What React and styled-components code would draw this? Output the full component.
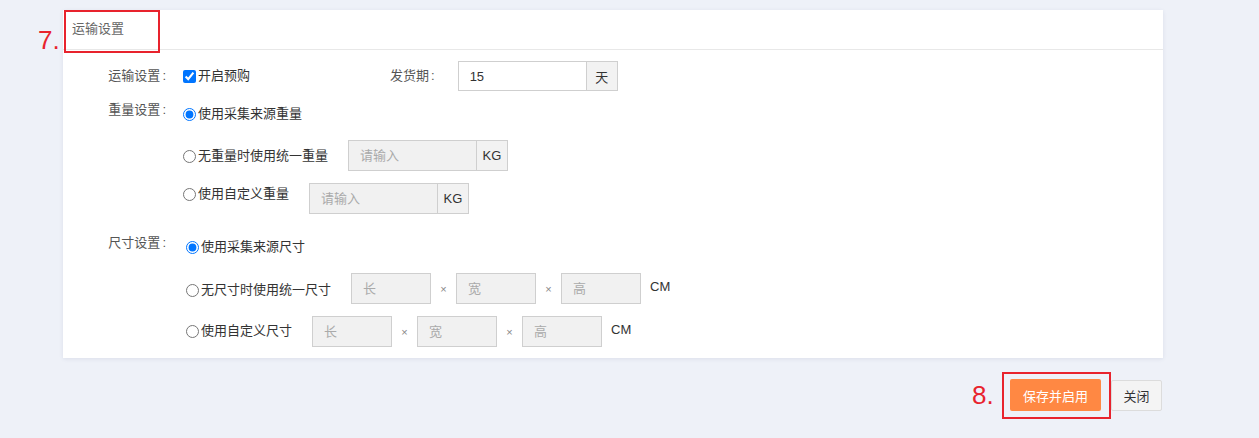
import React from "react";
import styled, { createGlobalStyle } from "styled-components";

const Global = createGlobalStyle`
  html, body { margin: 0; padding: 0; background: #eef1f8; }
  body { font-family: "Liberation Sans", "Noto Sans CJK SC", sans-serif; font-size: 13px; color: #333; min-height: 438px; }
`;

const Page = styled.div`
  padding: 10px 0 0 63px;
  width: 1100px;
`;

const Card = styled.section`
  position: relative;
  background: #fff;
  box-shadow: 0 1px 4px rgba(60, 70, 120, 0.10);
`;

const CardHeader = styled.header`
  height: 40px;
  display: flex;
  align-items: center;
  padding: 0 0 4px 9px;
  box-sizing: border-box;
  border-bottom: 1px solid #e8e8e8;
  color: #666;
  font-size: 13px;
`;

const Annot = styled.div`
  position: absolute;
  border: 2px solid #e8232d;
  box-sizing: border-box;
  pointer-events: none;
  z-index: 2;
`;

const AnnotNum = styled.span`
  position: absolute;
  color: #e8232d;
  font-family: "Liberation Sans", sans-serif;
  font-size: 26px;
  line-height: 26px;
`;

const Body = styled.div`
  padding: 11px 0 11px 0;
  display: flex;
  flex-direction: column;
`;

const Row = styled.div`
  display: flex;
  align-items: ${(p) => (p.$center ? "center" : "flex-start")};
  margin-top: ${(p) => p.$mt || 0}px;
`;

const Label = styled.div`
  width: ${(p) => (p.$auto ? "auto" : "103px")};
  text-align: right;
  color: #555;
  line-height: 20px;
  flex-shrink: 0;
  &::after { content: ":"; margin-left: 2px; }
`;

const Options = styled.div`
  display: flex;
  flex-direction: column;
  padding: 4px 0 0 ${(p) => p.$indent}px;
`;

const Option = styled.div`
  display: flex;
  align-items: flex-start;
  margin-top: ${(p) => p.$mt || 0}px;
`;

const Choice = styled.label`
  display: inline-flex;
  align-items: center;
  line-height: 20px;
  color: #333;
  padding-top: ${(p) => p.$pt || 0}px;
  width: ${(p) => (p.$w ? p.$w + "px" : "auto")};
  input {
    margin: 0 2px 0 0;
    width: 13px;
    height: 13px;
  }
`;

const Group = styled.div`
  display: flex;
  align-items: center;
  margin-left: ${(p) => p.$ml || 0}px;
`;

const Input = styled.input`
  box-sizing: border-box;
  width: ${(p) => p.$w}px;
  height: ${(p) => p.$h || 31}px;
  border: 1px solid #cfcfcf;
  background: ${(p) => (p.$filled ? "#fff" : "#f1f1f1")};
  padding: 0 11px;
  font: inherit;
  font-size: 13px;
  color: #333;
  outline: none;
  &::placeholder { color: #aaa; }
`;

const Addon = styled.span`
  box-sizing: border-box;
  height: ${(p) => p.$h || 31}px;
  width: 31px;
  display: flex;
  align-items: center;
  justify-content: center;
  border: 1px solid #cfcfcf;
  border-left: none;
  background: #f2f2f2;
  color: #333;
`;

const Times = styled.span`
  width: 25px;
  text-align: center;
  color: #888;
  font-size: 11px;
`;

const Unit = styled.span`
  margin-left: 9px;
  color: #333;
  align-self: flex-start;
  line-height: 28px;
`;

const Actions = styled.div`
  display: flex;
  justify-content: flex-end;
  align-items: center;
  gap: 10px;
  margin-top: 21px;
  padding: 0 1px 20px 0;
`;

const Marked = styled.div`
  position: relative;
  display: flex;
`;

const PrimaryButton = styled.button`
  width: 91px;
  height: 32px;
  border: none;
  border-radius: 2px;
  background: #ff8843;
  color: #fff;
  font: inherit;
  font-size: 13px;
`;

const PlainButton = styled.button`
  width: 51px;
  height: 31px;
  border: 1px solid #dcdcdc;
  border-radius: 2px;
  background: #f4f4f4;
  color: #333;
  font: inherit;
  font-size: 13px;
`;

const DimInputs = ({ w }) => (
  <Group $ml={20}>
    <Input $w={w} placeholder="长" />
    <Times>×</Times>
    <Input $w={w} placeholder="宽" />
    <Times>×</Times>
    <Input $w={w} placeholder="高" />
    <Unit>CM</Unit>
  </Group>
);

export default function App() {
  return (
    <>
      <Global />
      <Page>
        <Card>
          <CardHeader>运输设置</CardHeader>
          <Annot style={{ left: 1, top: 0, width: 96, height: 43 }} />
          <AnnotNum style={{ left: -25, top: 17 }}>7.</AnnotNum>
          <Body>
            <Row $center>
              <Label>运输设置</Label>
              <Group $ml={17}>
                <Choice $w={207}>
                  <input type="checkbox" defaultChecked />
                  开启预购
                </Choice>
                <Label $auto>发货期</Label>
                <Group $ml={23}>
                  <Input $w={129} $h={30} $filled defaultValue="15" />
                  <Addon $h={30}>天</Addon>
                </Group>
              </Group>
            </Row>

            <Row $mt={9}>
              <Label>重量设置</Label>
              <Options $indent={17}>
                <Option>
                  <Choice>
                    <input type="radio" name="w" defaultChecked />
                    使用采集来源重量
                  </Choice>
                </Option>
                <Option $mt={16}>
                  <Choice $pt={6}>
                    <input type="radio" name="w" />
                    无重量时使用统一重量
                  </Choice>
                  <Group $ml={20}>
                    <Input $w={129} placeholder="请输入" />
                    <Addon>KG</Addon>
                  </Group>
                </Option>
                <Option $mt={12}>
                  <Choice $pt={1}>
                    <input type="radio" name="w" />
                    使用自定义重量
                  </Choice>
                  <Group $ml={20}>
                    <Input $w={129} placeholder="请输入" />
                    <Addon>KG</Addon>
                  </Group>
                </Option>
              </Options>
            </Row>

            <Row $mt={19}>
              <Label>尺寸设置</Label>
              <Options $indent={20}>
                <Option>
                  <Choice>
                    <input type="radio" name="s" defaultChecked />
                    使用采集来源尺寸
                  </Choice>
                </Option>
                <Option $mt={16}>
                  <Choice $pt={7}>
                    <input type="radio" name="s" />
                    无尺寸时使用统一尺寸
                  </Choice>
                  <DimInputs w={80} />
                </Option>
                <Option $mt={12}>
                  <Choice $pt={5}>
                    <input type="radio" name="s" />
                    使用自定义尺寸
                  </Choice>
                  <DimInputs w={80} />
                </Option>
              </Options>
            </Row>
          </Body>
        </Card>

        <Actions>
          <Marked>
            <PrimaryButton>保存并启用</PrimaryButton>
            <Annot style={{ left: -8, top: -7, right: -10, bottom: -8 }} />
            <AnnotNum style={{ left: -38, top: 3 }}>8.</AnnotNum>
          </Marked>
          <PlainButton>关闭</PlainButton>
        </Actions>
      </Page>
    </>
  );
}
